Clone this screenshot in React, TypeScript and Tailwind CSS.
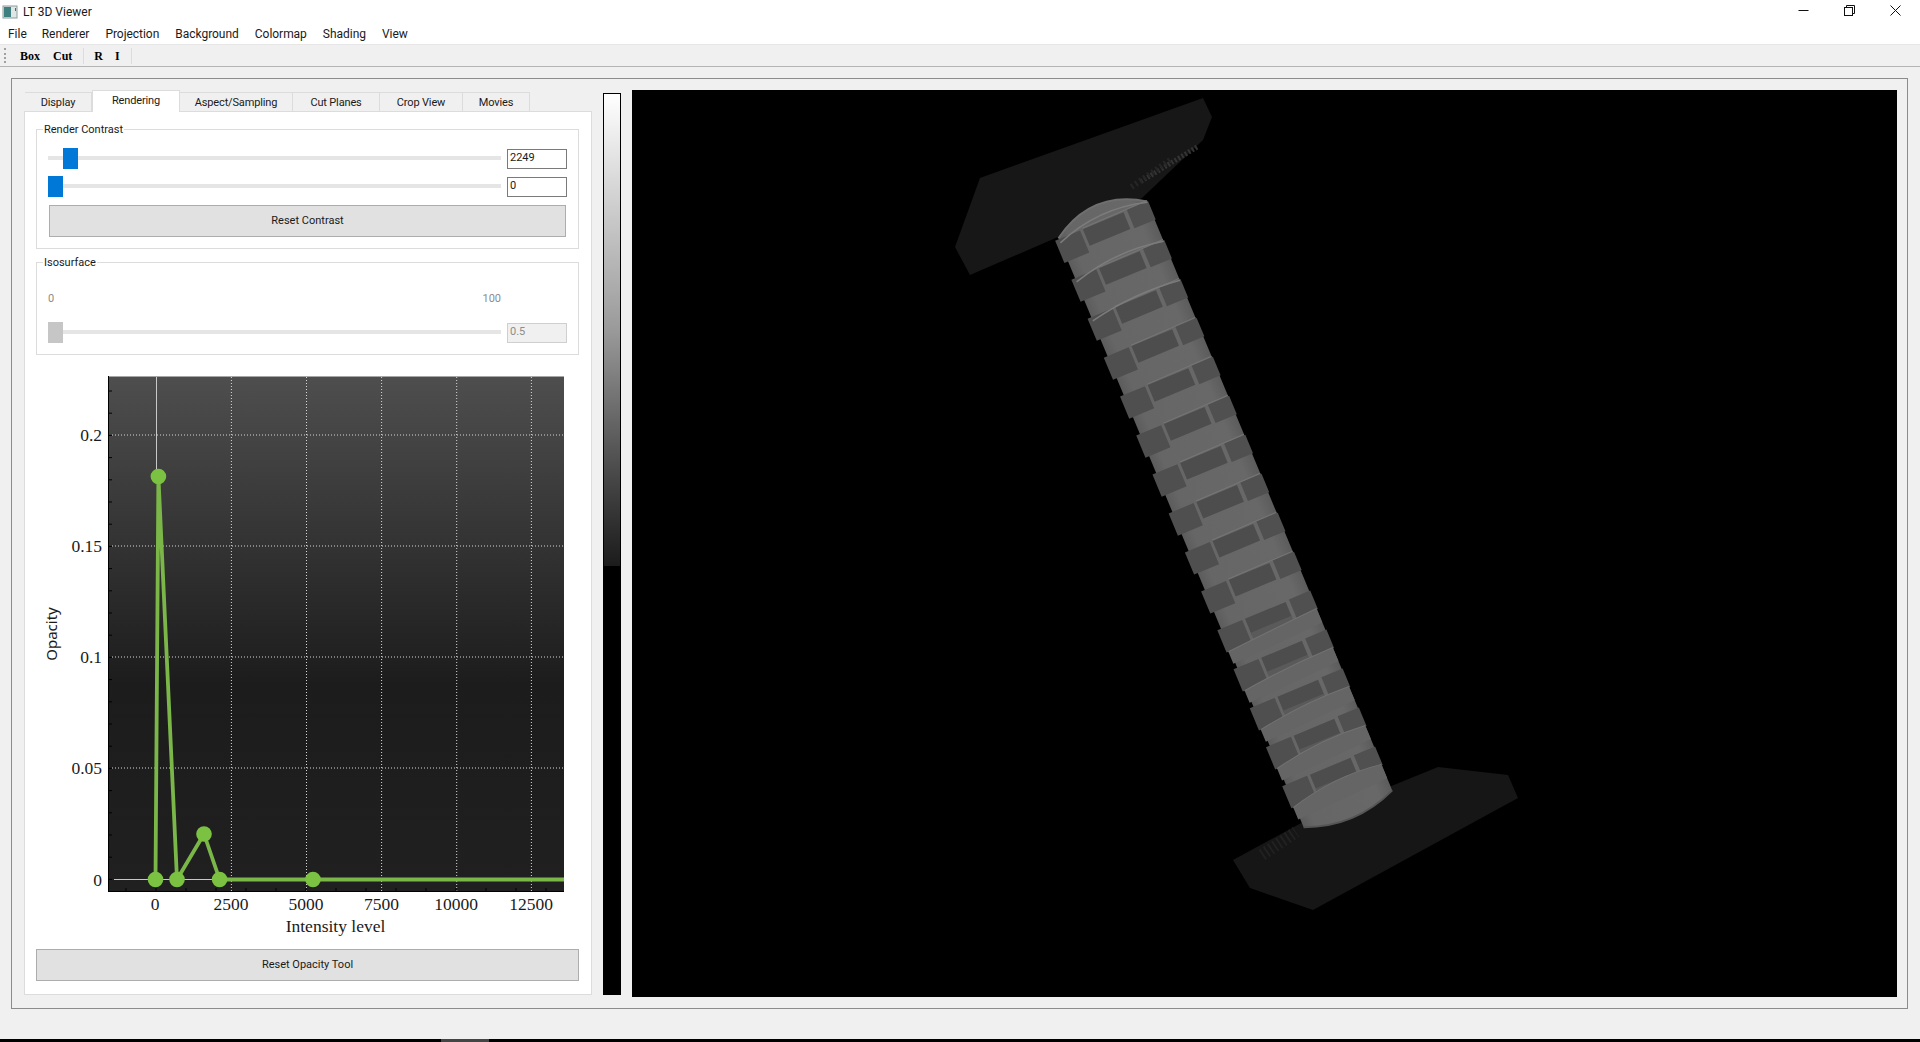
import { FC, ReactNode } from "react";

const UI_FONT = "font-['Roboto','Noto_Sans',sans-serif]";

const menus = ["File", "Renderer", "Projection", "Background", "Colormap", "Shading", "View"];

const tabs = [
  { label: "Display", width: 67 },
  { label: "Rendering", width: 88, active: true },
  { label: "Aspect/Sampling", width: 113 },
  { label: "Cut Planes", width: 87 },
  { label: "Crop View", width: 83 },
  { label: "Movies", width: 67 },
];

const TitleBar: FC = () => (
  <div className="flex h-[23px] items-center bg-white pl-[2px]">
    <svg width="16" height="14" viewBox="0 0 16 14">
      <rect x="1" y="1" width="14" height="12" fill="#dfe6e6" stroke="#8c9c9c" />
      <rect x="2" y="2" width="7" height="10" fill="#3f7f7f" />
      <rect x="13" y="3" width="1" height="3" fill="#3f6f6f" />
    </svg>
    <span className="ml-[5px] text-[12px] text-[#1a1a1a]">LT 3D Viewer</span>
    <div className="ml-auto -mt-[3px] flex items-center pr-[2px]">
      <div className="flex w-[46px] justify-center">
        <svg width="11" height="11" viewBox="0 0 11 11">
          <path d="M0.5 5.5H10.5" stroke="#111" />
        </svg>
      </div>
      <div className="flex w-[46px] justify-center">
        <svg width="11" height="11" viewBox="0 0 11 11" fill="none" stroke="#111">
          <rect x="0.5" y="2.5" width="8" height="8" />
          <path d="M2.5 2.5V0.5H10.5V8.5H8.5" />
        </svg>
      </div>
      <div className="flex w-[46px] justify-center">
        <svg width="11" height="11" viewBox="0 0 11 11" stroke="#111">
          <path d="M0.5 0.5L10.5 10.5M10.5 0.5L0.5 10.5" />
        </svg>
      </div>
    </div>
  </div>
);

const MenuBar: FC = () => (
  <div className="flex h-[22px] items-center gap-[16px] border-b border-[#e6e6e6] bg-white pl-[8px] text-[12px] tracking-[-0.03px] text-[#1a1a1a]">
    {menus.map((m) => (
      <span key={m} className="first:-mr-[1px]">
        {m}
      </span>
    ))}
  </div>
);

const ToolBar: FC = () => (
  <div className="flex h-[22px] items-center border-b border-[#b4b4b4] bg-[#f0f0f0] pl-[4px] font-['Liberation_Serif',serif] text-[12px] font-bold text-black">
    <div className="h-[15px] w-[2px] border-l-2 border-dotted border-[#a0a0a0]" />
    <span className="ml-[14px]">Box</span>
    <span className="ml-[13px]">Cut</span>
    <div className="ml-[11px] h-[16px] w-px bg-[#dcdcdc]" />
    <span className="ml-[10px]">R</span>
    <span className="ml-[12px]">I</span>
    <div className="ml-[11px] h-[16px] w-px bg-[#dcdcdc]" />
  </div>
);

const Slider: FC<{ handleLeft: string; value: string; disabled?: boolean }> = ({ handleLeft, value, disabled }) => (
  <div className="flex h-[21px] items-center gap-[6px]">
    <div className="relative h-full flex-1">
      <div className="absolute inset-x-0 top-[8px] h-[4px] bg-[#e5e5e5]" />
      <div className={`absolute top-0 h-full w-[15px] ${handleLeft} ${disabled ? "bg-[#c6c6c6]" : "bg-[#0078d7]"}`} />
    </div>
    <div
      className={`flex h-[20px] w-[60px] items-center border pl-[2px] text-[11px] ${
        disabled ? "border-[#cfcfcf] bg-[#f0f0f0] text-[#8c8c8c]" : "border-[#7a7a7a] bg-white text-[#1a1a1a]"
      }`}
    >
      {value}
    </div>
  </div>
);

const Group: FC<{ title: string; className: string; children: ReactNode }> = ({ title, className, children }) => (
  <div className={`relative border border-[#dcdcdc] ${className}`}>
    <span className="absolute left-[6px] top-[-8px] bg-white px-px text-[11px] leading-[15px] text-[#1a1a1a]">{title}</span>
    {children}
  </div>
);

const ResetButton: FC<{ label: string; className: string }> = ({ label, className }) => (
  <div className={`flex items-center justify-center border border-[#adadad] bg-[#e1e1e1] text-[11px] text-[#1a1a1a] ${className}`}>
    {label}
  </div>
);

// viewBox uses page coordinates, makes it easy to read values off the screenshot
const OpacityChart: FC = () => {
  const xGrid = [231.4, 306.5, 381.6, 456.7, 531.4];
  const yGrid = [435, 546, 657, 768];
  const xTicks = [
    { x: 155, label: "0" },
    { x: 231, label: "2500" },
    { x: 306, label: "5000" },
    { x: 381.6, label: "7500" },
    { x: 456, label: "10000" },
    { x: 531, label: "12500" },
  ];
  const yTicks = [
    { y: 435, label: "0.2" },
    { y: 546, label: "0.15" },
    { y: 657, label: "0.1" },
    { y: 768, label: "0.05" },
    { y: 879.5, label: "0" },
  ];
  const points = [
    [155.5, 879.5],
    [158.4, 476.5],
    [177, 879.5],
    [204, 834],
    [219.6, 879.5],
    [313, 879.5],
  ];
  const minorX: number[] = [];
  for (let x = 126; x < 564; x += 30) minorX.push(x);
  const minorY: number[] = [];
  for (let y = 391; y < 890; y += 22.2) minorY.push(y);

  return (
    <svg className="block h-[570px] w-[552px]" viewBox="36 372 552 570">
      <defs>
        <linearGradient id="plotBg" x1="0" y1="0" x2="0" y2="1">
          <stop offset="0" stopColor="#4e4e4e" />
          <stop offset="0.6" stopColor="#1c1c1c" />
          <stop offset="1" stopColor="#202020" />
        </linearGradient>
      </defs>
      <rect x="108.5" y="376.5" width="455.5" height="515" fill="url(#plotBg)" />
      {xGrid.map((x) => (
        <line key={x} x1={x} x2={x} y1="377" y2="891" stroke="#d8d8d8" strokeDasharray="1 2" />
      ))}
      {yGrid.map((y) => (
        <line key={y} x1="112" x2="564" y1={y} y2={y} stroke="#d8d8d8" strokeDasharray="1 2" />
      ))}
      <line x1="156.5" x2="156.5" y1="377" y2="480" stroke="#c8c8c8" />
      <line x1="114" x2="564" y1="879.5" y2="879.5" stroke="#c8c8c8" />
      <line x1="108.5" x2="108.5" y1="376" y2="892" stroke="#000" />
      <line x1="108" x2="564" y1="891.5" y2="891.5" stroke="#000" />
      {minorX.map((x) => (
        <line key={x} x1={x} x2={x} y1="888" y2="892" stroke="#000" />
      ))}
      {minorY.map((y) => (
        <line key={y} x1="109" x2="112" y1={y} y2={y} stroke="#000" />
      ))}
      <polyline
        points={`${points.map((p) => p.join(",")).join(" ")} 564,879.5`}
        fill="none"
        stroke="#7ab648"
        strokeWidth="3.8"
        strokeLinejoin="round"
      />
      {points.map((p) => (
        <circle key={p[0]} cx={p[0]} cy={p[1]} r="7.8" fill="#7cc242" />
      ))}
      <g fontFamily="'Liberation Serif', serif" fontSize="17.5" fill="#1a1a1a">
        {xTicks.map((t) => (
          <text key={t.label} x={t.x} y="910" textAnchor="middle">
            {t.label}
          </text>
        ))}
        {yTicks.map((t) => (
          <text key={t.label} x="102" y={t.y + 6} textAnchor="end">
            {t.label}
          </text>
        ))}
        <text x="335.5" y="932" textAnchor="middle">
          Intensity level
        </text>
        <text x="0" y="0" textAnchor="middle" fontFamily="'Noto Sans', sans-serif" fontSize="15" transform="translate(57 634) rotate(-90)">
          Opacity
        </text>
      </g>
    </svg>
  );
};

// the specimen in the 3D view, page coordinates again
const VolumeRender: FC = () => {
  const bands = Array.from({ length: 15 }, (_, i) => i);
  return (
    <svg className="block h-full w-full" viewBox="632 90 1265 907">
      <defs>
        <linearGradient id="ringShade" x1="0" y1="0" x2="1" y2="0">
          <stop offset="0" stopColor="#5c5c5c" />
          <stop offset="0.12" stopColor="#666" />
          <stop offset="0.85" stopColor="#686868" />
          <stop offset="1" stopColor="#5c5c5c" />
        </linearGradient>
      </defs>
      {/* top plate */}
      <polygon points="980,178 1203,98 1212,117 1203,140 1142,198 1058,237 970,275 955,247" fill="#171717" />
      <line x1="1197" y1="147" x2="1140" y2="182" stroke="#343434" strokeWidth="5" strokeDasharray="2 2" />
      <line x1="1170" y1="160" x2="1130" y2="188" stroke="#262626" strokeWidth="6" strokeDasharray="2 3" />
      {/* bottom plate */}
      <polygon points="1233,860 1303,822 1438,767 1508,775 1518,798 1313,910 1250,888" fill="#161616" />
      <path d="M1262 855L1296 832" stroke="#212121" strokeWidth="12" strokeDasharray="2 3" />

      <g transform="translate(1102 218) rotate(-22.6)">
        <path d="M-48 2Q0 -30 48 2L48 640Q0 660 -48 640Z" fill="url(#ringShade)" />
        <path d="M-48 640Q0 660 48 640" stroke="#555" strokeWidth="2" fill="none" />
        <path d="M-48 2Q0 -30 48 2" stroke="#6f6f6f" strokeWidth="2" fill="none" />
        {bands.map((i) => {
          const y = 12 + i * 42.2;
          // rings bend more towards both ends of the column
          const topBend = i < 3 ? 3 - i : 0;
          const lowBend = i > 9 ? i - 9 : 0;
          return (
            <g key={i}>
              <rect x="-52" y={y - 9} width="27" height="24" fill="#4f4f4f" />
              <rect x="-22" y={y - 9} width="44" height="18" fill="#4d4d4d" />
              <rect x="26" y={y - 10} width="23" height="20" fill="#505050" />
              {lowBend > 0 ? (
                <>
                  <rect x="-22" y={y + 6} width="44" height="8" fill="#5a5a5a" />
                  <path
                    d={`M-50 ${y + 15}Q0 ${y + 14 - lowBend * 2.5} 48 ${y + 9}L48 ${y + 24}L-50 ${y + 28}Z`}
                    fill="#656565"
                  />
                  <path d={`M-50 ${y + 15}Q0 ${y + 14 - lowBend * 2.5} 48 ${y + 9}`} stroke="#727272" fill="none" />
                </>
              ) : (
                <path d={`M-22 ${y - 10}L48 ${y - 11}`} stroke="#767676" fill="none" />
              )}
              {topBend > 0 && (
                <path d={`M-48 ${y - 5}Q0 ${y - 11 - topBend * 4} 48 ${y - 9}`} stroke="#7c7c7c" strokeWidth="1.5" fill="none" />
              )}
            </g>
          );
        })}
      </g>
    </svg>
  );
};

const App: FC = () => (
  <div className={`flex h-[1042px] w-[1920px] flex-col overflow-hidden bg-[#f0f0f0] ${UI_FONT}`}>
    <TitleBar />
    <MenuBar />
    <ToolBar />

    <div className="ml-[11px] mr-[12px] mt-[11px] flex h-[931px] border border-[#8c8c8c] pl-[12px] pr-[10px] pt-[11px]">
      <div className="flex w-[568px] flex-col">
        <div className="flex h-[21px] items-end pl-px text-[11px] tracking-[-0.15px] text-[#1a1a1a]">
          {tabs.map((t) =>
            t.active ? (
              <div key={t.label} style={{ width: t.width }} className="z-10 -mb-px flex h-[22px] items-center justify-center border border-b-0 border-[#dcdcdc] bg-white">
                {t.label}
              </div>
            ) : (
              <div key={t.label} style={{ width: t.width }} className="flex h-[19px] items-center justify-center border border-b-0 border-l-0 border-[#dcdcdc] bg-[#f0f0f0] pt-[2px]">
                {t.label}
              </div>
            ),
          )}
        </div>
        <div className="flex h-[884px] flex-col border border-[#dcdcdc] bg-white pl-[11px] pr-[12px] pt-[17px]">
          <Group title="Render Contrast" className="h-[120px] px-[11px] pt-[18px]">
            <Slider handleLeft="left-[15px]" value="2249" />
            <div className="mt-[7px]">
              <Slider handleLeft="left-0" value="0" />
            </div>
            <ResetButton label="Reset Contrast" className="ml-px mr-[1px] mt-[8px] h-[32px]" />
          </Group>
          <Group title="Isosurface" className="mt-[13px] h-[93px] px-[11px]">
            <div className="mr-[66px] mt-[29px] flex justify-between text-[11px] leading-[14px] text-[#8c8c8c]">
              <span>0</span>
              <span>100</span>
            </div>
            <div className="mt-[16px]">
              <Slider handleLeft="left-0" value="0.5" disabled />
            </div>
          </Group>
          <div className="mt-[17px]">
            <OpacityChart />
          </div>
          <ResetButton label="Reset Opacity Tool" className="mt-[7px] h-[32px]" />
        </div>
      </div>

      <div className="ml-[11px] mt-[3px] flex h-[902px] w-[18px] flex-col border border-black">
        <div className="h-[472px] bg-gradient-to-b from-white via-[#9a9a9a] to-[#1c1c1c]" />
        <div className="flex-1 bg-black" />
      </div>

      <div className="ml-[11px] h-[907px] flex-1 bg-black">
        <VolumeRender />
      </div>
    </div>

    <div className="relative mt-auto h-[3px] bg-black">
      <div className="absolute left-[441px] top-0 h-full w-[48px] bg-[#444]" />
    </div>
  </div>
);

export default App;
